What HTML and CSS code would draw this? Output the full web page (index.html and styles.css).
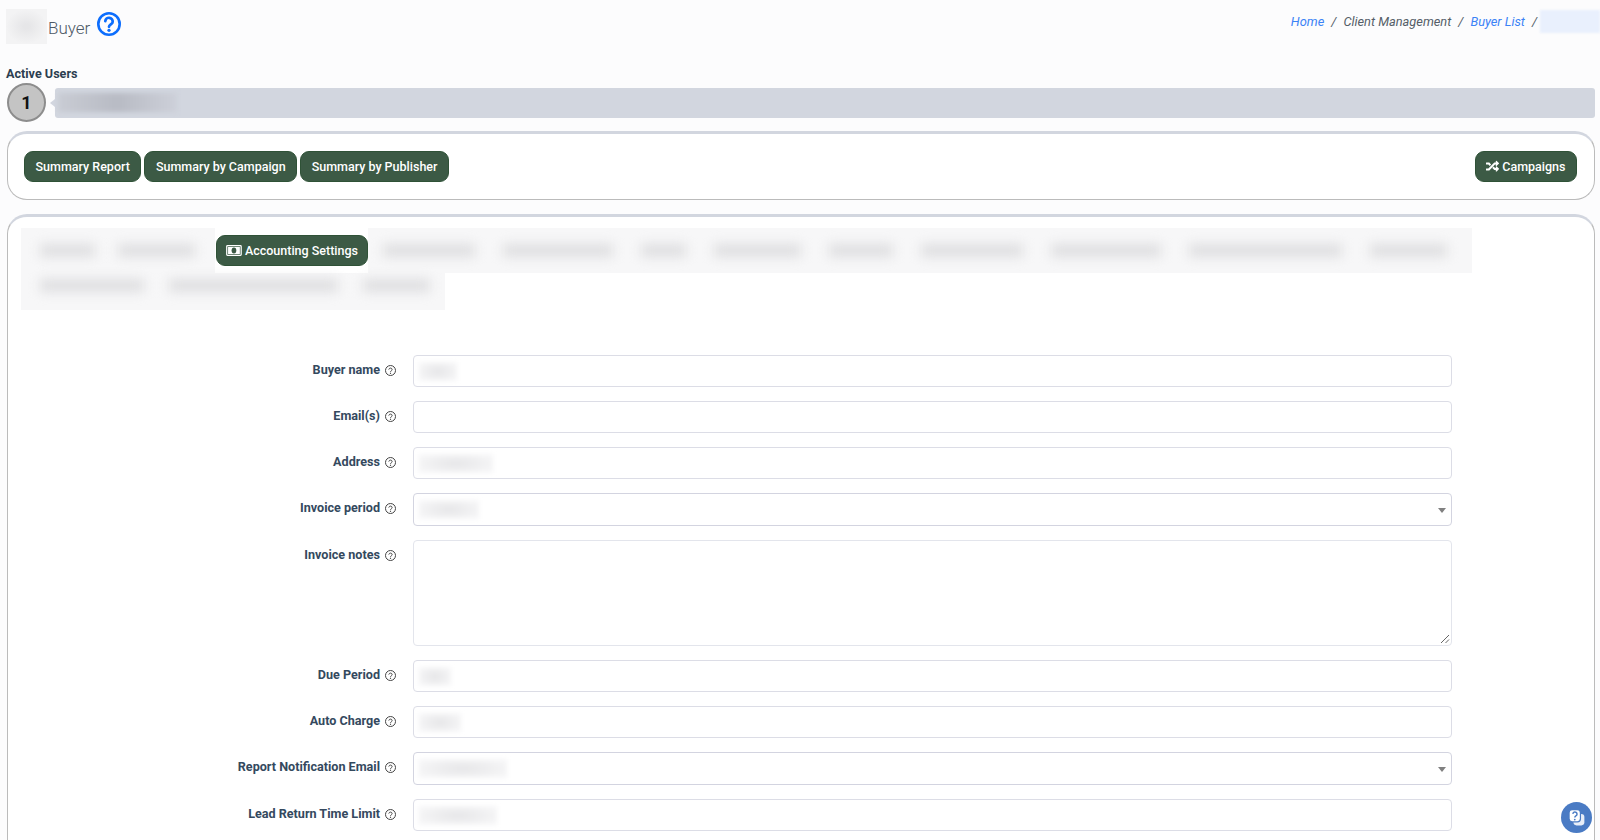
FILE: index.html
```html
<!DOCTYPE html>
<html lang="en">
<head>
<meta charset="utf-8">
<title>Buyer</title>
<link rel="stylesheet" href="styles.css">
</head>
<body>
<svg class="sprite" aria-hidden="true"><defs>
<symbol id="q" viewBox="1 1 22 22"><circle cx="12" cy="12" r="10" fill="none" stroke="currentColor" stroke-width="2"/><path d="M8.8 9.4a3.3 3.3 0 0 1 6.4 .6c0 2.2-3.2 2.6-3.2 4.6" fill="none" stroke="currentColor" stroke-width="2" stroke-linecap="round"/><circle cx="12" cy="17.6" r="1.3" fill="currentColor"/></symbol>
<symbol id="qb" viewBox="1 1 22 22"><circle cx="12" cy="12" r="9.8" fill="none" stroke="currentColor" stroke-width="2.4"/><path d="M8.6 9.4a3.4 3.4 0 0 1 6.8 .6c0 2.2-3.4 2.6-3.4 4.6" fill="none" stroke="currentColor" stroke-width="2.5" stroke-linecap="round"/><circle cx="12" cy="17.8" r="1.5" fill="currentColor"/></symbol>
</defs></svg>
<header class="top">
  <div class="title">
    <span class="blur-name"></span>
    <h1>Buyer</h1>
    <svg class="help"><use href="#qb"/></svg>
  </div>
  <nav class="crumbs">
    <a>Home</a><i>/</i><span>Client Management</span><i>/</i><a>Buyer List</a><i>/</i><span class="blur-crumb"></span>
  </nav>
</header>
<section class="active">
  <div class="active-label">Active Users</div>
  <div class="active-row">
    <div class="count">1</div>
    <div class="user-bar"><span class="user-blur"></span></div>
  </div>
</section>
<section class="card actions">
  <div class="btn-group">
    <a class="btn">Summary Report</a>
    <a class="btn">Summary by Campaign</a>
    <a class="btn">Summary by Publisher</a>
  </div>
  <a class="btn">
    <svg class="ico" viewBox="0 0 512 512"><path fill="currentColor" d="M504 368l-80 80c-15 15-40 4-40-17v-40h-59a12 12 0 0 1-9-4l-70-75 53-57 56 60h29v-40c0-21 26-32 40-17l80 80a14 14 0 0 1 0 30zM12 176a12 12 0 0 1-12-12v-56a12 12 0 0 1 12-12h110a12 12 0 0 1 9 4l70 75-53 57-56-56zm372 0h-29L131 412a12 12 0 0 1-9 4H12a12 12 0 0 1-12-12v-56a12 12 0 0 1 12-12h80L325 100a12 12 0 0 1 9-4h50V56c0-21 26-32 40-17l80 80a14 14 0 0 1 0 30l-80 80c-15 15-40 4-40-17z"/></svg>
    Campaigns
  </a>
</section>
<section class="card main">
  <div class="tabs">
    <div class="tab-row">
      <div class="tab-blur first"><span class="p p55"></span><span class="p p77"></span></div>
      <a class="btn tab">
        <svg class="ico bill" viewBox="0 0 20 14"><rect x="0.8" y="0.8" width="18.4" height="12.4" rx="1" fill="none" stroke="currentColor" stroke-width="1.6"/><rect x="2.5" y="2.5" width="15" height="9" fill="currentColor"/><ellipse cx="10" cy="7" rx="3" ry="3.8" fill="#3c5a45"/></svg>
        Accounting Settings
      </a>
      <div class="tab-blur rest">
        <span class="p p92"></span><span class="p p110"></span><span class="p p45"></span><span class="p p87"></span><span class="p p64"></span><span class="p p102"></span><span class="p p110"></span><span class="p p153"></span><span class="p p77"></span>
      </div>
    </div>
    <div class="tab-blur second"><span class="p p104"></span><span class="p p169"></span><span class="p p67"></span></div>
  </div>
  <form class="form">
    <label class="lbl">Buyer name <svg class="q"><use href="#q"/></svg></label>
    <div class="field"><span class="val v36"></span></div>
    <label class="lbl">Email(s) <svg class="q"><use href="#q"/></svg></label>
    <div class="field"></div>
    <label class="lbl">Address <svg class="q"><use href="#q"/></svg></label>
    <div class="field"><span class="val v70"></span></div>
    <label class="lbl">Invoice period <svg class="q"><use href="#q"/></svg></label>
    <div class="field select"><span class="val v55"></span></div>
    <label class="lbl">Invoice notes <svg class="q"><use href="#q"/></svg></label>
    <div class="field area"><svg class="grip" viewBox="0 0 10 10"><path d="M1 9 9 1M5.5 9 9 5.5" stroke="#666" stroke-width="1" fill="none"/></svg></div>
    <label class="lbl">Due Period <svg class="q"><use href="#q"/></svg></label>
    <div class="field"><span class="val v32"></span></div>
    <label class="lbl">Auto Charge <svg class="q"><use href="#q"/></svg></label>
    <div class="field"><span class="val v40"></span></div>
    <label class="lbl">Report Notification Email <svg class="q"><use href="#q"/></svg></label>
    <div class="field select"><span class="val v85"></span></div>
    <label class="lbl">Lead Return Time Limit <svg class="q"><use href="#q"/></svg></label>
    <div class="field"><span class="val v75"></span></div>
  </form>
</section>
<button class="chat" aria-label="Help">
  <svg viewBox="0 0 24 24"><rect x="8.5" y="8" width="12.5" height="13" rx="3.5" fill="#e8eef8"/><rect x="3.5" y="3" width="13" height="14" rx="3.5" fill="#fff" stroke="#4a7bc4" stroke-width="1.4"/><path d="M7.8 7.8a2.4 2.4 0 1 1 3.4 2.4c-.9.5-1.1 1-1.1 1.8" fill="none" stroke="#4a7bc4" stroke-width="1.7"/><circle cx="10" cy="14.4" r="1" fill="#4a7bc4"/></svg>
</button>
</body>
</html>
```
FILE: styles.css
```css
html, body { margin: 0; height: 840px; overflow: hidden; }
body {
  background: #fcfcfd;
  font-family: Roboto, "Liberation Sans", sans-serif;
  font-size: 13px;
  color: #2c3e50;
  padding: 0 5px 0 7px;
  box-sizing: border-box;
}
.sprite { display: none; }
.top { display: flex; justify-content: space-between; align-items: flex-start; height: 67px; margin-left: -1px; margin-right: -5px; padding-top: 9px; box-sizing: border-box; }
.title { display: flex; align-items: center; height: 35px; }
.blur-name { width: 41px; height: 35px; background: radial-gradient(ellipse at center, #e6e6e8 10%, #f3f3f4 70%); }
.title h1 { margin: 0 0 0 1px; padding-top: 3px; font-size: 17px; font-weight: 300; color: #4d5966; }
.help { width: 24px; height: 24px; margin-left: 7px; margin-top: -6px; color: #0d6efd; }
.crumbs { display: flex; align-items: center; font-style: italic; font-size: 12.8px; color: #555e68; margin-top: 1px; }
.crumbs a { color: #3b82f6; }
.crumbs i { margin: 0 7px; }
.blur-crumb { width: 60px; height: 23px; background: #e9f0fd; filter: blur(1px); margin-left: -4px; }
.active-label { font-size: 12.6px; font-weight: 700; color: #2c3e50; line-height: 14px; margin-bottom: 1px; margin-left: -1px; }
.active-row { display: flex; align-items: center; height: 40px; }
.count { width: 39px; height: 39px; box-sizing: border-box; border: 2px solid #8d8d8d; border-radius: 50%; background: #c4c4c4; color: #111; font-size: 18px; font-weight: 700; display: flex; align-items: center; justify-content: center; flex: none; }
.user-bar { position: relative; flex: 1; height: 30px; margin-left: 9px; margin-top: 1px; background: #d2d6df; border-radius: 3px; display: flex; align-items: center; padding-left: 3px; }
.user-bar::before { content: ""; position: absolute; left: -5px; top: 11px; border: 4px solid transparent; border-left: 0; border-right-color: #d2d6df; border-right-width: 5px; }
.user-blur { width: 119px; height: 19px; background: linear-gradient(90deg, #c9ccd4, #b8bbc4 50%, #cdd0d9); filter: blur(2px); }
.card { background: #fff; border: 1px solid #bbb; border-top: 3px solid #d2d6df; border-radius: 20px; }
.actions { display: flex; justify-content: space-between; align-items: center; height: 69px; box-sizing: border-box; margin-top: 9px; padding: 0 17px 1px 16px; }
.btn-group { display: flex; gap: 3px; }
.btn { display: inline-flex; align-items: center; gap: 3px; height: 31px; padding: 0 10.5px; box-sizing: border-box; background: #3c5a45; border: 1px solid #2f5237; border-radius: 9px; color: #fff; font-size: 12.5px; font-weight: 500; white-space: nowrap; }
.ico { width: 13px; height: 13px; }
.ico.bill { width: 16px; height: 11px; }
.main { margin-top: 14px; height: 700px; border-bottom: 0; padding: 11px 0 0 13px; box-sizing: border-box; }
.tab-row { display: flex; align-items: center; }
.tab { margin: 0 0 0 1px; width: 152px; padding: 0 9px; }
.tab-blur { display: flex; align-items: center; background: #f7f7f8; height: 45px; box-sizing: border-box; }
.first { width: 194px; padding-left: 19px; gap: 23px; }
.rest { width: 1104px; padding-left: 15px; }
.second { width: 424px; height: 37px; padding-left: 19px; padding-bottom: 12px; gap: 25px; }
.p { height: 13px; background: #dedee0; filter: blur(6px); flex: none; }
.rest .p { margin-right: 28px; }
.p45 { width: 45px; } .p55 { width: 55px; } .p64 { width: 64px; } .p67 { width: 67px; } .p77 { width: 77px; } .p87 { width: 87px; } .p92 { width: 92px; } .p102 { width: 102px; } .p104 { width: 104px; } .p110 { width: 110px; } .p153 { width: 153px; } .p169 { width: 169px; }
.form { display: grid; grid-template-columns: 375px 1039px; column-gap: 17px; row-gap: 14px; margin-top: 45px; }
.lbl { display: flex; justify-content: flex-end; align-items: flex-start; gap: 5px; font-size: 12.6px; font-weight: 700; color: #34495e; line-height: 14px; padding-top: 8px; }
.q { width: 11px; height: 11px; margin-top: 2px; color: #444; flex: none; }
.field { position: relative; height: 32px; box-sizing: border-box; border: 1.5px solid #dcdde6; border-radius: 4px; display: flex; align-items: center; padding-left: 5px; }
.select { height: 33px; border-color: #d3d4e0; }
.select::after { content: ""; position: absolute; right: 5px; top: 14px; border: 4px solid transparent; border-bottom: 0; border-top: 5px solid #808080; }
.area { height: 106px; border-color: #e3e5ec; }
.grip { position: absolute; right: 1px; bottom: 1px; width: 10px; height: 10px; }
.val { height: 19px; background: radial-gradient(ellipse at center, #e6e6e8, #f6f6f7 80%); filter: blur(2px); }
.v32 { width: 32px; } .v36 { width: 38px; } .v40 { width: 42px; } .v55 { width: 60px; } .v70 { width: 74px; } .v75 { width: 78px; } .v85 { width: 88px; }
.chat { position: absolute; left: 1561px; top: 802px; width: 31px; height: 31px; padding: 5px; border: 0; border-radius: 50%; background: #4a7bc4; }
.chat svg { display: block; width: 21px; height: 21px; }
```
